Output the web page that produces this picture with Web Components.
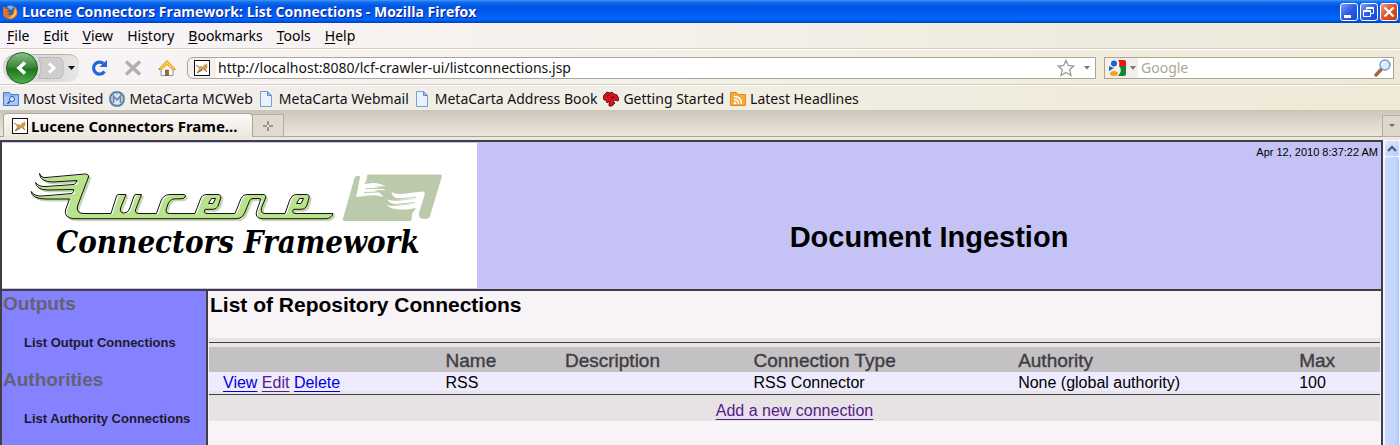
<!DOCTYPE html>
<html lang="en">
<head>
<meta charset="utf-8">
<title>Lucene Connectors Framework: List Connections</title>
<style>
html, body { margin: 0; height: 100%; }
body { font-family: "Liberation Sans", Arial, sans-serif; overflow: hidden; --ui: "Noto Sans", Tahoma, sans-serif; }
</style>
</head>
<body>
<browser-window></browser-window>
<script>
const define = (name, html) => {
  const template = document.createElement('template');
  template.innerHTML = '<style>*{box-sizing:border-box}button{font:inherit;color:inherit;background:none;border:0;padding:0;margin:0;display:flex;align-items:center;justify-content:center}svg{display:block;flex:none}</style>' + html;
  customElements.define(name, class extends HTMLElement {
    constructor() {
      super();
      this.attachShadow({ mode: 'open' }).append(template.content.cloneNode(true));
    }
  });
};

define('cat-icon', `<style>:host{display:block;flex:none}</style>
<svg width="16" height="16" viewBox="0 0 16 16"><rect x=".5" y=".5" width="15" height="15" fill="#fff" stroke="#111"/><path d="M3 12 5 9 4 7 7 6 9 7 10 4 11 5 13 3 13.500 7 12 9 13 12 10 10 7 11 4 13Z" fill="#cf9a52"/><path d="M2 5 5 7M3 13 8 10M13 12 11 10" stroke="#555" stroke-width=".8" fill="none"/></svg>`);

define('title-bar', `<style>
:host{display:flex;align-items:center;height:23px;padding:0 2px;background:linear-gradient(#3f98ff 0,#1470ee 2px,#0054e3 6px,#0058ee 12px,#0066ff 18px,#0060f8 20px,#0040b4 100%)}
.t{flex:1;margin-left:4px;font:bold 14px/20px "Open Sans","Trebuchet MS",sans-serif;color:#fff;text-shadow:1px 1px 0 #0a1883;white-space:nowrap}
.b{display:flex;gap:2px}
button{width:18px;height:18px;border:1px solid #fff;border-radius:3px;background:linear-gradient(135deg,#7e9ff5,#2a5ce6 50%,#1a46cf)}
.x{background:linear-gradient(135deg,#f09a80,#e0512c 50%,#c23a12)}
</style>
<svg width="16" height="18" viewBox="0 0 16 18"><circle cx="8" cy="9" r="7" fill="#3b63b5"/><path d="M5 4Q8 1 12 4L9 7Z" fill="#7fb4ea"/><path d="M1 3 4 6 7 6 5 8 8 10 5 11Q9 14 12 10L11 7 13 8 12 3Q17 7 15 12 12 17 7 16 0 15 1 8Z" fill="#e8731a"/><path d="M13 5Q16 9 13 13 10 16 6 15 12 14 13 5Z" fill="#ffc43a"/></svg>
<span class="t">Lucene Connectors Framework: List Connections - Mozilla Firefox</span>
<div class="b">
<button aria-label="Minimize"><svg width="16" height="16"><path d="M3 11h7v3H3z" fill="#fff"/></svg></button>
<button aria-label="Restore"><svg width="16" height="16" fill="none" stroke="#fff"><path d="M2.500 6.500h7v6h-7zM2 7.500h8M5.500 6V3.500h7v6H10M5 4.500h8"/></svg></button>
<button class="x" aria-label="Close"><svg width="16" height="16"><path d="M3.500 3.500 12.500 12.500M12.500 3.500 3.500 12.500" stroke="#fff" stroke-width="2.200"/></svg></button>
</div>`);

define('menu-bar', `<style>
:host{display:flex;gap:14px;height:27px;padding:0 7px;border-bottom:1px solid #fff;box-shadow:inset 0 -1px #d9d0ba;font:14px/24px var(--ui);background:linear-gradient(90deg,#f8f4f8,#f5f2ec 45%,#efebdf 75%,#ece9da)}
u{text-underline-offset:2px}
</style>
<button><span><u>F</u>ile</span></button><button><span><u>E</u>dit</span></button><button><span><u>V</u>iew</span></button><button><span>Hi<u>s</u>tory</span></button><button><span><u>B</u>ookmarks</span></button><button><span><u>T</u>ools</span></button><button><span><u>H</u>elp</span></button>`);

define('nav-bar', `<style>
:host{display:flex;align-items:center;height:36px;padding:0 6px 0 3px;border-bottom:1px solid #fff;box-shadow:inset 0 -1px #d9d0ba;background:linear-gradient(90deg,#f8f4f7,#f4f1eb 45%,#f0eddc 75%,#efe9d8);font:14px/20px var(--ui)}
.h{display:flex;align-items:center;height:28px;width:76px;border-radius:14px 10px 10px 14px;background:linear-gradient(90deg,#dcdada 50px,#e9e7e6);box-shadow:inset 0 1px #b9b3ac;margin-right:10px}
.i{width:20px;margin-right:14px}
.box{display:flex;align-items:center;height:22px;border:1px solid #a9a597;background:#fff}
.u{flex:1;border-radius:6px 0 0 6px;margin-left:-4px;margin-right:8px;background:linear-gradient(90deg,#f4f1ec 28px,#fff 28px)}
.s{flex:0 1 290px}
cat-icon{margin:0 8px 0 6px}
input{flex:1;min-width:0;border:0;padding:0;background:none;font:inherit;color:#111;outline:0}
input::placeholder{color:#aaa796;opacity:1}
.e{display:flex;align-items:center;height:20px;width:33px;background:#f3efec;margin-right:3px;padding-left:2px;gap:3px}
</style>
<div class="h">
<button aria-label="Back"><svg width="35" height="34" viewBox="0 0 35 34"><defs><linearGradient id="g" x2="0" y2="1"><stop stop-color="#8fbe8f"/><stop offset=".45" stop-color="#3c8a3c"/><stop offset=".55" stop-color="#1f761f"/><stop offset="1" stop-color="#51b34b"/></linearGradient></defs><circle cx="19" cy="17" r="15.500" fill="url(#g)" stroke="#236423"/><path d="M22 11.500 16 17 22 22.500" stroke="#fff" stroke-width="3.600" fill="none"/></svg></button>
<button aria-label="Forward"><svg width="26" height="24" viewBox="0 0 26 24"><path d="M0 1.500H20Q25 1.500 25 7V17Q25 22.500 20 22.500H0Q6 12 0 1.500Z" fill="#cfcdcd" stroke="#bdbaba"/><path d="M11 7.500 16 12 11 16.500" stroke="#fff" stroke-width="3" fill="none"/></svg></button>
<button aria-label="Recent pages"><svg width="14" height="10"><path d="M4 3h7L7.500 7z" fill="#111"/></svg></button>
</div>
<button class="i" aria-label="Reload"><svg width="20" height="20" viewBox="0 0 20 20"><path d="M15.500 13.500A6 6 0 1 1 14.500 5.500" stroke="#2468d8" stroke-width="3.200" fill="none"/><path d="M18 2V9H10.500Z" fill="#2468d8"/></svg></button>
<button class="i" aria-label="Stop"><svg width="20" height="20" viewBox="0 0 20 20"><path d="M3 3.500 17 16.500M17 3.500 3 16.500" stroke="#b1afad" stroke-width="3.600"/></svg></button>
<button class="i" aria-label="Home"><svg width="20" height="20" viewBox="0 0 20 20"><path d="M4 10V17.500H16V10L10 5Z" fill="#fbfaf8" stroke="#8b98b0"/><path d="M8.500 12h3v5.500h-3z" fill="#a86c2c" stroke="#5a4632" stroke-width=".6"/><path d="M1.500 11.500 10 2.500 18.500 11.500 16 12 10 6.500 4 12Z" fill="#ffcf3c" stroke="#d8941c"/></svg></button>
<div class="box u"><cat-icon></cat-icon><input aria-label="Location" value="http://localhost:8080/lcf-crawler-ui/listconnections.jsp">
<button aria-label="Bookmark this page"><svg width="18" height="18" viewBox="0 0 18 18"><path d="M9 1.500 11.300 6.500 16.700 7 12.700 10.800 14 16.500 9 13.500 4 16.500 5.300 10.800 1.300 7 6.700 6.500Z" fill="#fdfdfd" stroke="#9a9a9a" stroke-width="1.300"/></svg></button>
<button aria-label="Show history"><svg width="20" height="8"><path d="M9 2h6L12 5.500z" fill="#777"/></svg></button></div>
<div class="box s"><button class="e" aria-label="Search engine"><svg width="17" height="16" viewBox="0 0 17 16"><path d="M9 0H15Q17 0 17 2V6H10Q11 2 9 0Z" fill="#e8170f"/><path d="M10 6H17V14Q17 16 15 16H9Q14 10 10 6Z" fill="#11853b"/><ellipse cx="5" cy="3.500" rx="3" ry="3" fill="#2160c4"/><path d="M0 6 5 8 0 11Z" fill="#2160c4"/><ellipse cx="5" cy="13.500" rx="4" ry="2.500" fill="#f3a51a"/></svg><svg width="8" height="6"><path d="M1 1h6L4 5z" fill="#777"/></svg></button>
<input aria-label="Search" placeholder="Google"><button aria-label="Go"><svg width="20" height="18" viewBox="0 0 20 18"><path d="M9 9.500 3 16" stroke="#a9683a" stroke-width="3.400" stroke-linecap="round"/><circle cx="12" cy="6" r="5" fill="#d5ecfc" stroke="#6f9fd0" stroke-width="1.400"/><path d="M9 6Q9 3 12 3" stroke="#fff" stroke-width="1.500" fill="none"/></svg></button></div>`);

define('bookmark-link', `<style>
:host{display:flex}
a{display:flex;align-items:center;gap:4px;color:#111;text-decoration:none;white-space:nowrap}
</style><a href="#"><slot name="icon"></slot><slot></slot></a>`);

const page = '<svg slot="icon" width="16" height="16" viewBox="0 0 16 16"><path d="M1.500.5H8.500L12.500 4.500V15.500H1.500Z" fill="#eaf2ff" stroke="#7d9dd4"/><path d="M8.500.5V4.500H12.500Z" fill="#a9c5f0" stroke="#6688c8"/></svg>';
define('bookmarks-bar', `<style>
:host{display:flex;gap:6px;height:24px;padding:1px 3px 0;background:linear-gradient(90deg,#f1eeee,#f1eee4 50%,#efe9d6);font:14px/24px var(--ui)}
</style>
<bookmark-link><svg slot="icon" width="16" height="16" viewBox="0 0 16 16"><path d="M.5 1.500H6.500L8 3.500H15.500V14.500H.5Z" fill="#8eb6f4" stroke="#4a7ad0"/><path d="M1 5.500H15V14H1Z" fill="#a8c8fa"/><circle cx="9" cy="8" r="2.500" fill="#d9e8ff" stroke="#3557a8"/><path d="M7 10 4.500 13" stroke="#3557a8" stroke-width="1.500"/></svg>Most Visited</bookmark-link>
<bookmark-link><svg slot="icon" width="16" height="16" viewBox="0 0 16 16"><circle cx="8" cy="8" r="7" fill="#dfe8f2" stroke="#5c7f9f" stroke-width="2"/><path d="M4.500 12V5L8 9 11.500 5V12" fill="none" stroke="#6a8cb0" stroke-width="1.800"/><path d="M8 0V4M0 8H3M13 8H16M8 13V16" stroke="#86a3bf"/></svg>MetaCarta MCWeb</bookmark-link>
<bookmark-link>${page}MetaCarta Webmail</bookmark-link>
<bookmark-link>${page}MetaCarta Address Book</bookmark-link>
<bookmark-link><svg slot="icon" width="16" height="16" viewBox="0 0 16 16"><path d="M1 4 4 1 7 2 9 1 11 3 14 4 16 8 15 10 11 9 10 10 12 12 9 15 6 15 6 10 4 12 3 9 1 9 0 7Z" fill="#d8141a" stroke="#340808" stroke-width=".8"/><path d="M4 5 6 4M8 7 11 6" stroke="#400"/></svg>Getting Started</bookmark-link>
<bookmark-link><svg slot="icon" width="16" height="16" viewBox="0 0 16 16"><path d="M.5 1.500H6.500L8 3.500H15.500V14.500H.5Z" fill="#f9a93a" stroke="#e58a16"/><circle cx="5" cy="12" r="1.300" fill="#fff"/><path d="M4 8.500Q8.500 8.500 8.500 13M4 5.500Q11.500 5.500 11.500 13" stroke="#fff" stroke-width="1.500" fill="none"/></svg>Latest Headlines</bookmark-link>`);

define('tab-bar', `<style>
:host{display:flex;align-items:flex-end;height:30px;padding-left:3px;border-bottom:3px solid #ece8df;background:linear-gradient(#c9c5b8,#dcd6cb 12px,#ece5da 26px,#a9a598 26px);font:15px/24px var(--ui)}
.t{width:250px;height:24px;border:1px solid #a9a598;border-bottom:0;border-radius:4px 4px 0 0;background:linear-gradient(#fcfaf8,#ece8df);justify-content:flex-start;gap:3px;padding:0 8px;white-space:nowrap;font-weight:700;color:#000}
.n{width:31px;height:23px;border:1px solid #b3aea2;border-left:0;background:#e0dad0}
.a{width:18px;height:22px;margin-left:auto;border:1px solid #b3aea2;border-right:0;background:#ddd6cc}
</style>
<button class="t"><cat-icon></cat-icon><span>Lucene Connectors Frame...</span></button>
<button class="n" aria-label="New tab"><svg width="10" height="10"><path d="M4 0h2v4h4v2H6v4H4V6H0V4h4z" fill="#96938e"/><path d="M4 4h2v2H4z" fill="#eee"/></svg></button>
<button class="a" aria-label="List all tabs"><svg width="8" height="6"><path d="M1 1h6L4 4z" fill="#666"/></svg></button>`);

const word = 'M39.500 173.500Q41 178 46 177.500L85 174Q89 174 88.500 177L77.500 206Q76 213 83 213.500H111L116.500 196Q117 194.500 119 194.500H126L120.500 208Q119.500 213 124 213Q128 213 129.500 209L134 196Q134.500 194.500 136 194.500H141.500L135.500 210Q135 213.500 139 213.500H156.500L160.500 202Q163 194.500 170 194.500H183Q186.500 194.500 185 197Q184 199 180 198.800H175Q170 199 168 204L166 210Q165.500 213.500 169 213.500H195L200.500 199Q202 194.500 207 194.500H218Q221.500 194.500 220.700 198L218.500 205Q217 209.300 212 209.300H205Q203 213.500 207 213.500H235L241 198.500Q243 194.500 247 194.500H263Q266.500 194.500 265.500 198L261.500 208Q260.500 213.500 265 213.500H285L290 199.500Q292 194.500 296 194.500H306Q310 194.500 309 198L307 205Q305.500 209.300 301 209.300H293.500Q291 213.500 296 213.500H333Q331 218.700 326 218.700H262Q254 218 257 210L260.500 200Q261 198.500 259 198.500H253Q250.500 198.500 249.500 201L245 212Q242.500 218.700 236 218.700H73Q64 217.500 65.500 210L69.500 199H46Q32 199 31 191.500Q35 196.500 42 196L72 193.500Q74.500 191.500 73.500 189.500L48 190Q36.500 190 35.500 182.500Q39 187 46 186.500L74 184.500Q77 182.500 77 180.500L53 182Q40 182 39.500 173.500Z';
define('lucene-logo', `<style>
:host{display:flex;width:475px;height:145px;background:#fff}
svg{width:475px;height:145px}
text{font:italic bold 31px "DejaVu Serif Condensed","DejaVu Serif",serif}
</style>
<svg viewBox="2 143 475 145" role="img" aria-label="Lucene Connectors Framework">
<defs><path id="w" d="${word}"/><clipPath id="c"><use href="#w"/></clipPath></defs>
<use href="#w" fill="#cfcfcd" stroke="#cfcfcd" transform="translate(2 2)"/>
<use href="#w" fill="#b9e28d" stroke="#b9e28d" transform="translate(1 1)"/>
<use href="#w" fill="#fff"/><g clip-path="url(#c)"><use href="#w" fill="#b9e28d" stroke="#b9e28d" transform="translate(2 1)"/></g>
<use href="#w" fill="none" stroke="#111"/>
<path d="M211.500 198.500H215.500L213 203.500H208.500ZM299.500 198.500H303.500L301 203.500H296.500Z" fill="#fff" stroke="#111"/>
<path d="M357 176H361Q364 174.500 367 174.500H440Q442.500 174.500 441.700 177L430 216Q429 219 426 219L418 218 411 221H345Q342 221 343 218.500L354.500 178Q355 176 357 176Z" fill="#bccaac"/>
<path d="M360.500 174H367.500Q367 180 364.500 184L373 183Q381 183 385.500 186.500Q381 186 374 187Q382 187.500 386 190.500Q381 189.500 374 190.500Q380 192 383.500 197Q377 194.500 368 195.500L357 197Q355.500 196.500 357 193Z" fill="#fff"/>
<path d="M366 188.500 384 188.500M364 192.500 378 192" stroke="#bccaac"/>
<path d="M391.500 192Q395 194.500 402 194L422 191.500Q425.500 191.500 424.500 195L419 213Q418.500 217 421 219L419 222H411Q412 219 412 214L416 208Q407 210 400 209.500 390 209 386.500 205Q392 206.500 399 205.500L414 204 400 204.500Q390 204.500 387 199.500Q393 201.500 401 200.500L415 199 402 199.500Q392 199 391.500 192Z" fill="#fff"/>
<path d="M396 204.500 415 202.500M396 199 416 197.500" stroke="#bccaac"/>
<text x="56" y="253">Connectors Framework</text>
</svg>`);

define('page-banner', `<style>
:host{display:flex;padding:1px 0;background:#c5c3f6;border-bottom:2px solid #403e43}
.r{flex:1;display:flex;flex-direction:column;text-align:center}
time{align-self:flex-end;font-size:11px;line-height:18px;margin-right:3px}
h1{margin:60px 0 0;font-size:29px;line-height:32px}
</style><lucene-logo></lucene-logo><div class="r"><time>Apr 12, 2010 8:37:22 AM</time><h1>Document Ingestion</h1></div>`);

define('side-menu', `<style>
:host{display:block;flex:none;width:206px;background:#8582ff;border-right:2px solid #403e43;padding-left:1px}
h2{margin:0;font-size:19px;line-height:26px;color:#646173}
a{display:block;margin:16px 0 15px;padding-left:21px;font-size:13px;line-height:19px;font-weight:bold;color:#1c1a2e;text-decoration:none}
</style>
<h2>Outputs</h2><a href="#">List Output Connections</a><h2>Authorities</h2><a href="#">List Authority Connections</a>`);

define('connection-list', `<style>
:host{display:block;flex:1;padding:0 1px;background:#f8f3f7}
h2{margin:0 0 19px;padding-left:1px;font-size:21px;line-height:28px}
table{width:100%;table-layout:fixed;border-collapse:collapse;background:#e7e2e6;font-size:16px;line-height:17px}
th,td{padding:0;text-align:left;white-space:nowrap}
.l td{height:9px;background:linear-gradient(#e7e5e6 4px,#3f3f42 4px,#3f3f42 5px,#e7e5e6 5px)}
.m td{height:4px;background:linear-gradient(#e7e5e6 3px,#3f3f42 3px)}
th{font-size:19px;font-weight:normal;height:25px;padding-top:2px;background:#c4c1c5;color:#403e42;-webkit-text-stroke:.4px #403e42}
.d td{background:#eeebff;padding-top:2px}
.d td:first-child{padding-left:14px}
.f{height:26px;padding-top:4px;text-align:center}
a{color:#0000d8;text-underline-offset:3px}
.v{color:#551a8b}
</style>
<h2>List of Repository Connections</h2>
<table><colgroup><col style="width:20.200%"><col style="width:10.200%"><col style="width:16.100%"><col style="width:22.600%"><col style="width:24%"><col></colgroup>
<tbody><tr class="l"><td colspan="6"></td></tr>
<tr><th></th><th>Name</th><th>Description</th><th>Connection Type</th><th>Authority</th><th>Max</th></tr>
<tr class="d"><td><a href="#">View</a> <a class="v" href="#">Edit</a> <a href="#">Delete</a></td><td>RSS</td><td></td><td>RSS Connector</td><td>None (global authority)</td><td>100</td></tr>
<tr class="m"><td colspan="6"></td></tr>
<tr><td colspan="6" class="f"><a class="v" href="#">Add a new connection</a></td></tr></tbody></table>`);

define('scroll-bar', `<style>
:host{display:flex;flex-direction:column;gap:1px;flex:none;width:17px;padding:1px 1px 0 2px;background:#f4f6ff}
button{height:15px;border-radius:2px;background:linear-gradient(135deg,#dbe6ff,#b9cdfb)}
div{flex:1;border-radius:2px 2px 0 0;background:linear-gradient(90deg,#cbd8fe,#c3d4fe 70%,#b4c8f6)}
</style><button aria-label="Scroll up"><svg width="12" height="10"><path d="M2 7 6 3 10 7" fill="none" stroke="#4d6185" stroke-width="2.400"/></svg></button><div></div>`);

define('browser-window', `<style>
:host{display:flex;flex-direction:column;height:100vh}
title-bar,menu-bar,nav-bar,bookmarks-bar,tab-bar{flex:none}
.v{flex:1;display:flex;min-height:0}
main{flex:1;display:flex;flex-direction:column;border:2px solid #403e43;border-bottom:0}
.b{flex:1;display:flex}
</style>
<title-bar></title-bar><menu-bar></menu-bar><nav-bar></nav-bar><bookmarks-bar></bookmarks-bar><tab-bar></tab-bar>
<div class="v"><main><page-banner></page-banner><div class="b"><side-menu></side-menu><connection-list></connection-list></div></main><scroll-bar></scroll-bar></div>`);
</script>
</body>
</html>
